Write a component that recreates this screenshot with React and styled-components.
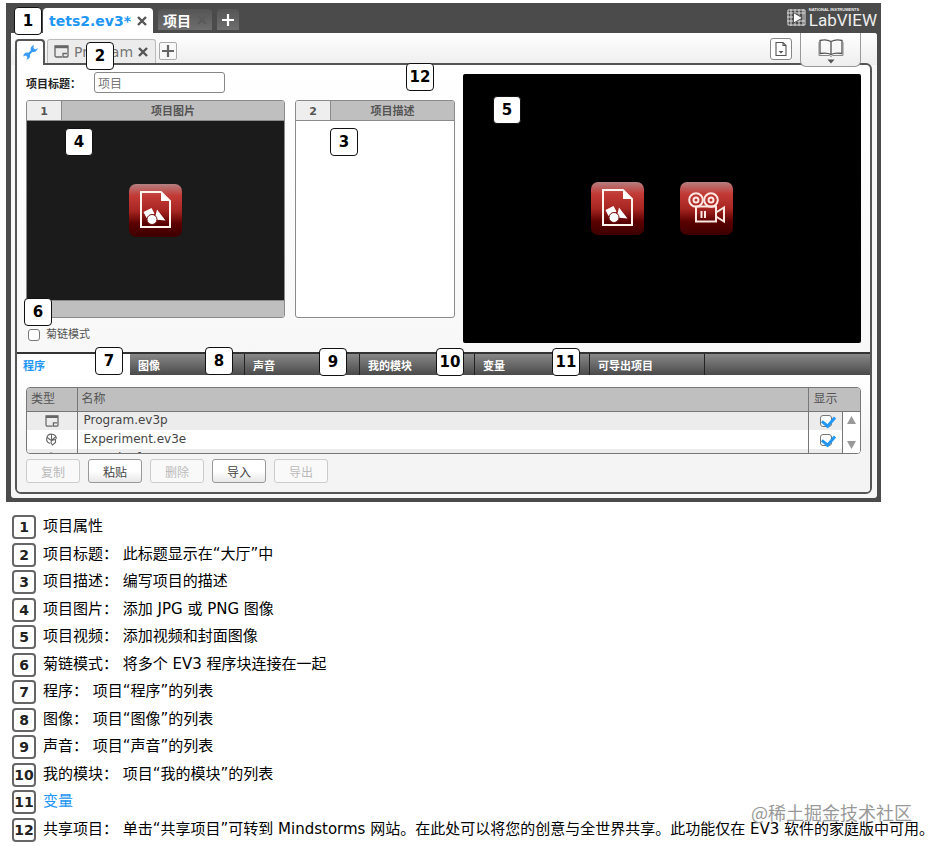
import React from "react";
import styled, { createGlobalStyle } from "styled-components";

const sans = `"DejaVu Sans", "Noto Sans CJK SC", sans-serif`;
const blue = "#2196f3";
const frameGray = "#4b4b4b";
const lineGray = "#8a8a8a";

const GlobalStyle = createGlobalStyle`
  * {
    box-sizing: border-box;
  }
  body {
    margin: 0;
    background: #fff;
    font-family: ${sans};
  }
  button, input {
    font-family: inherit;
  }
`;

const Page = styled.main`
  padding: 3px 0 2px;
`;

const Figure = styled.figure`
  position: relative;
  margin: 0 55px 0 6px;
`;

const Frame = styled.div`
  padding: 0 4px 4px 5px;
  background: ${frameGray};
`;

const TitleBar = styled.header`
  display: flex;
  align-items: flex-end;
  height: 30px;
  padding-left: 32px;
`;

const ProjectTab = styled.button`
  display: flex;
  align-items: center;
  gap: 6px;
  height: ${(p) => (p.$active ? 25 : 21)}px;
  margin: 0 5px ${(p) => (p.$active ? 0 : 3)}px 0;
  padding: 0 ${(p) => (p.$active ? 6 : 5)}px;
  border: 0;
  border-radius: 4px 4px 0 0;
  background: ${(p) =>
    p.$active ? "#fff" : "linear-gradient(#555, #6e6e6e)"};
  color: ${(p) => (p.$active ? blue : "#fff")};
  font-size: 14px;
  font-weight: bold;
`;

const Brand = styled.div`
  display: flex;
  align-items: center;
  align-self: center;
  gap: 2px;
  margin-left: auto;
  color: #eee;
`;

const BrandText = styled.div`
  font: 17px/16px Roboto, sans-serif;
`;

const BrandSmall = styled.div`
  font: bold 4px/4px "Liberation Sans", sans-serif;
`;

const Body = styled.div`
  padding: 0 5px 4px 4px;
  border-radius: 0 3px 3px 3px;
  background: #f7f7f7;
`;

const ToolBar = styled.div`
  display: flex;
  align-items: flex-end;
  height: 32px;
  margin: 0 -5px 0 -4px;
  padding: 0 16px 0 4px;
  border-radius: 0 3px 0 0;
  background: linear-gradient(#fff, #eee);
`;

const SettingsTab = styled.button`
  position: relative;
  z-index: 1;
  width: 30px;
  height: 26px;
  padding: 2px 0 0;
  border: 2px solid #555;
  border-bottom: 0;
  border-radius: 4px 4px 0 0;
  background: #fff;
`;

const ProgramTab = styled.button`
  display: flex;
  align-items: center;
  gap: 5px;
  width: 109px;
  height: 24px;
  margin: 0 3px 2px 2px;
  padding: 0 6px;
  border: 1px solid #bbb;
  border-bottom: 0;
  border-radius: 3px 3px 0 0;
  background: #ececec;
  color: #777;
  font-size: 14px;
`;

const AddButton = styled.button`
  display: grid;
  place-items: center;
  width: 18px;
  height: 18px;
  margin-bottom: 5px;
  padding: 0;
  border: 1px solid #aaa;
  border-radius: 2px;
  background: #f8f8f8;
`;

const CommentButton = styled.button`
  display: grid;
  place-items: center;
  width: 22px;
  height: 22px;
  margin: 0 8px 5px auto;
  padding: 0;
  border: 1px solid #888;
  border-radius: 3px;
  background: #fff;
`;

const BookButton = styled.button`
  position: relative;
  z-index: 1;
  align-self: flex-start;
  width: 61px;
  height: 34px;
  padding: 5px 0 0;
  border: 1px solid #999;
  border-top: 0;
  border-radius: 0 0 6px 6px;
  background: linear-gradient(#fff, #eee);
`;

const Panel = styled.div`
  margin-top: -2px;
  border: 2px solid #555;
  border-radius: 0 6px 6px 6px;
  background: linear-gradient(#fff, #f4f4f4);
  overflow: hidden;
`;

const Properties = styled.section`
  display: flex;
  gap: 8px;
  padding: 7px 9px 9px;
`;

const Details = styled.div`
  flex: 429 1 0;
  min-width: 0;
`;

const TitleField = styled.label`
  display: flex;
  align-items: center;
  color: #222;
  font-size: 11px;
  font-weight: bold;
`;

const FieldName = styled.span`
  width: 68px;
`;

const TitleInput = styled.input`
  width: 131px;
  height: 21px;
  padding: 0 3px;
  border: 1px solid #888;
  border-radius: 3px;
  background: #fff;
  color: #777;
  font-size: 12px;
`;

const Cards = styled.div`
  display: grid;
  grid-template-columns: 259fr 160fr;
  gap: 10px;
  height: 218px;
  margin-top: 7px;
`;

const Card = styled.div`
  display: flex;
  flex-direction: column;
  border: 1px solid ${lineGray};
  border-radius: 3px;
  background: #fff;
  overflow: hidden;
`;

const CardHead = styled.div`
  display: flex;
  height: 20px;
  border-bottom: 1px solid ${lineGray};
  background: #bfbfbf;
  color: #555;
  font-size: 11px;
  font-weight: bold;
  line-height: 21px;
  text-align: center;
`;

const CardNumber = styled.span`
  width: 35px;
  border-right: 1px solid ${lineGray};
  background: #eee;
`;

const CardTitle = styled.span`
  flex: 1;
`;

const Preview = styled.div`
  display: grid;
  flex: 1;
  place-items: center;
  background: #1b1b1b;
`;

const CardFoot = styled.div`
  height: 17px;
  border-top: 1px solid ${lineGray};
  background: #bfbfbf;
`;

const Description = styled.textarea`
  flex: 1;
  min-width: 0;
  border: 0;
  background: transparent;
  resize: none;
`;

const Video = styled.div`
  display: flex;
  flex: 398 1 0;
  align-items: center;
  justify-content: center;
  gap: 36px;
  height: 269px;
  margin-top: 2px;
  border-radius: 2px;
  background: #000;
`;

const MediaButton = styled.button`
  display: grid;
  place-items: center;
  width: 53px;
  height: 53px;
  padding: 0;
  border: 0;
  border-radius: 7px;
  background: linear-gradient(#b58080, #c33a36 22%, #a82622 50%, #5a0000 75%, #3c0000);
`;

const ChainLabel = styled.label`
  display: flex;
  align-items: center;
  gap: 6px;
  margin-top: 10px;
  padding-left: 2px;
  color: #555;
  font-size: 11px;
  line-height: 14px;
`;

const CheckBox = styled.input`
  position: relative;
  width: 12px;
  height: 12px;
  margin: 0;
  border: 1px solid #777;
  border-radius: 3px;
  background: #fff;
  appearance: none;

  &:checked::after {
    content: "";
    position: absolute;
    top: -2px;
    left: 3px;
    width: 6px;
    height: 10px;
    border: solid ${blue};
    border-width: 0 3px 3px 0;
    transform: rotate(40deg);
  }
`;

const TabStrip = styled.nav`
  display: flex;
  height: 23px;
  border-top: 2px solid #333;
  background: linear-gradient(#888, #4a4a4a);
`;

const StripTab = styled.button`
  width: ${(p) => (p.$active ? 113 : 115)}px;
  padding: 0 0 0 ${(p) => (p.$active ? 6 : 8)}px;
  border: 0;
  border-right: ${(p) => (p.$active ? 0 : 1)}px solid #222;
  background: ${(p) => (p.$active ? "#fff" : "transparent")};
  color: ${(p) => (p.$active ? blue : "#fff")};
  font-size: 11px;
  font-weight: bold;
  text-align: left;
`;

const Files = styled.section`
  padding: 12px 9px 9px;
  background: linear-gradient(#fff, #f4f4f4 60%);
`;

const TableBox = styled.div`
  height: 67px;
  border: 1px solid #777;
  border-radius: 4px;
  background: #fff;
  overflow: hidden;
`;

const FileTable = styled.table`
  width: 100%;
  border-collapse: collapse;
  table-layout: fixed;
  color: #444;
  font-size: 12px;
`;

const HeadCell = styled.th`
  height: 23px;
  padding: 0 0 0 4px;
  border-right: 1px solid #777;
  border-bottom: 1px solid #777;
  background: #bfbfbf;
  color: #555;
  font-weight: normal;
  line-height: 16px;
  text-align: left;

  &:last-child {
    border-right: 0;
  }
`;

const FileRow = styled.tr`
  height: 19px;
  background: ${(p) => (p.$shaded ? "#ececec" : "#fff")};
`;

const Cell = styled.td`
  height: 19px;
  padding: 0 0 0 ${(p) => (p.$center ? 0 : 6)}px;
  border-right: 1px solid #777;
  line-height: 15px;
  text-align: ${(p) => (p.$center ? "center" : "left")};

  svg, input {
    vertical-align: middle;
  }
`;

const ScrollCell = styled.td`
  padding: 0;
  background: #fff;
  vertical-align: top;
`;

const Scroll = styled.div`
  display: flex;
  flex-direction: column;
  justify-content: space-between;
  align-items: center;
  height: 41px;
  padding: 4px 0;
`;

const ScrollButton = styled.button`
  display: grid;
  padding: 0;
  border: 0;
  background: none;
`;

const Actions = styled.div`
  display: flex;
  gap: 8px;
  margin-top: 5px;
`;

const ActionButton = styled.button`
  width: 54px;
  height: 24px;
  padding: 0;
  border: 1px solid #999;
  border-radius: 3px;
  background: linear-gradient(#fff 50%, #e8e8e8);
  color: #444;
  font-size: 12px;

  &:disabled {
    border-color: #ccc;
    background: #f9f9f9;
    color: #bbb;
  }
`;

const Badge = styled.span`
  display: grid;
  flex: none;
  place-items: center;
  width: ${(p) => p.$size}px;
  height: ${(p) => p.$size}px;
  border: ${(p) => (p.$size > 24 ? "1px solid #111" : "2px solid #666")};
  border-radius: 4px;
  background: #fff;
  color: ${(p) => (p.$size > 24 ? "#000" : "#222")};
  font-size: ${(p) => (p.$size > 24 ? 15 : 14)}px;
  font-weight: bold;
  line-height: 20px;
`;

const Callout = styled(Badge)`
  position: absolute;
  z-index: 2;
  top: ${(p) => p.$y}px;
  left: ${(p) => p.$x}px;
`;

const Legend = styled.ol`
  display: grid;
  grid-auto-rows: 28px 27px;
  position: relative;
  margin: 11px 0 0;
  padding: 0 0 0 12px;
  list-style: none;
`;

const LegendItem = styled.li`
  display: flex;
  align-items: center;
  gap: 7px;
  color: #000;
  font-size: 15px;
  line-height: 20px;
  white-space: pre;
`;

const LegendText = styled.span`
  padding-bottom: 2px;
`;

const LegendLink = styled.a`
  color: ${blue};
  text-decoration: none;
`;

const Watermark = styled.span`
  position: absolute;
  right: 24px;
  bottom: 18px;
  color: #999;
  font: 18px/26px "Noto Sans CJK SC", sans-serif;
  text-shadow: 0 0 2px #fff;
`;

const Cross = ({ color = "#555", size = 10 }) => (
  <svg width={size} height={size} viewBox="0 0 10 10" aria-hidden="true">
    <path d="M1 1l8 8M9 1L1 9" stroke={color} strokeWidth="2.4" />
  </svg>
);

const Plus = ({ color, size = 12 }) => (
  <svg width={size} height={size} viewBox="0 0 12 12" aria-hidden="true">
    <path d="M6 0v12M0 6h12" stroke={color} strokeWidth="2.2" />
  </svg>
);

const WrenchIcon = () => (
  <svg width="17" height="17" viewBox="0 0 17 17" aria-hidden="true">
    <path
      d="M12 1.2a4 4 0 0 0-3.2 5.2L6.4 8.8a3.6 3.6 0 0 0-5 3.8l2.2-1.2 1.8 1.7-1 2.3a3.6 3.6 0 0 0 3.5-5l2.5-2.5a4 4 0 0 0 5.2-3.8l-2.3 1.5-2-1.7z"
      fill="#3a9bf5"
    />
  </svg>
);

const ProgramIcon = ({ width = 15 }) => (
  <svg width={width} height={width - 2} viewBox="0 0 15 13" aria-hidden="true">
    <path
      d="M8 12H2.5Q1 12 1 10.500V1H14V11q0 1-1 1H9V8.500h4"
      fill="none"
      stroke="#666"
      strokeWidth="1.3"
    />
    <path d="M1 2h13" stroke="#666" strokeWidth="2.4" />
  </svg>
);

const ExperimentIcon = () => (
  <svg width="13" height="13" viewBox="0 0 13 13" aria-hidden="true">
    <g fill="none" stroke="#666" strokeWidth="1.1">
      <path d="M5 10.500A4.800 4.800 0 1 1 11.300 6" />
      <path d="M6.500 1v7M2 4.500l4.500 3L11 3.500M6.500 7.500l4-1v3l-3 2.500-1.500-2z" />
    </g>
  </svg>
);

const CommentIcon = () => (
  <svg width="14" height="16" viewBox="0 0 14 16" aria-hidden="true">
    <path d="M2 1.500h7l3 3v10H2zM9 1.500v3h3" fill="none" stroke="#555" strokeWidth="1.1" />
    <path d="M4.500 10h5L7 12.500z" fill="#555" />
  </svg>
);

const BookIcon = () => (
  <svg width="28" height="26" viewBox="0 0 28 26" aria-hidden="true">
    <path
      d="M14 3.500Q9 .8 3 2.500V15.500q7-1.200 11 1 4-2.200 11-1V2.500Q19 .8 14 3.500zM14 3.500V16"
      fill="none"
      stroke="#555"
      strokeWidth="1.3"
    />
    <path d="M2 4v13.500h10.500l1.500 1 1.500-1H26V4" fill="none" stroke="#888" />
    <path d="M10.500 21.500h7L14 25.500z" fill="#555" />
  </svg>
);

const ImageIcon = () => (
  <svg width="37" height="41" viewBox="0 0 37 41" aria-hidden="true">
    <path d="M4 2h20l9 9v26H4z" fill="none" stroke="#fff3ee" strokeWidth="2" />
    <path d="M24 2v9h9z" fill="#fff" />
    <path d="M6.500 22l8-4 3 5.500-8 4.500zM20 19.500l8.500 11-11-1z" fill="#fff" />
    <circle cx="15" cy="29.500" r="5" fill="#fff" stroke="#751010" />
  </svg>
);

const CameraIcon = () => (
  <svg width="39" height="35" viewBox="0 0 39 35" aria-hidden="true">
    <g fill="none" stroke="#ffe8e2" strokeWidth="2">
      <circle cx="9" cy="9" r="6.800" />
      <circle cx="9" cy="9" r="2.500" />
      <circle cx="24" cy="9" r="6.800" />
      <circle cx="24" cy="9" r="2.500" />
      <path d="M9 15.500h20v15H9z" />
      <path d="M29 21.500l8-5v14l-8-5M14.500 20v7M18 20v7" />
    </g>
  </svg>
);

const BrandIcon = () => (
  <svg width="20" height="18" viewBox="0 0 20 18" aria-hidden="true">
    <path
      d="M0 4h18M0 8h6M0 12h18M4 0v17M8 0v17M12 0v17M16 0v17M1 1h17v15H1z"
      fill="none"
      stroke="#ddd"
    />
    <path d="M6.500 3.500l9 5.500-9 5z" fill="#fff" stroke="#555" />
  </svg>
);

const Arrow = ({ down }) => (
  <svg width="9" height="8" viewBox="0 0 9 8" aria-hidden="true">
    <path d={down ? "M0 0h9L4.500 8z" : "M0 8h9L4.500 0z"} fill="#999" />
  </svg>
);

const callouts = [
  { n: 1, x: 8, y: 4 },
  { n: 2, x: 80, y: 39 },
  { n: 3, x: 324, y: 125 },
  { n: 4, x: 59, y: 125 },
  { n: 5, x: 487, y: 93 },
  { n: 6, x: 18, y: 295 },
  { n: 7, x: 89, y: 344 },
  { n: 8, x: 199, y: 344 },
  { n: 9, x: 313, y: 345 },
  { n: 10, x: 430, y: 345 },
  { n: 11, x: 546, y: 345 },
  { n: 12, x: 400, y: 60 },
];

const tabs = ["程序", "图像", "声音", "我的模块", "变量", "可导出项目"];

const files = [
  { name: "Program.ev3p", icon: <ProgramIcon width={14} /> },
  { name: "Experiment.ev3e", icon: <ExperimentIcon /> },
  { name: "Sound.rsf", icon: <ExperimentIcon /> },
];

const actions = [
  { label: "复制", disabled: true },
  { label: "粘贴" },
  { label: "删除", disabled: true },
  { label: "导入" },
  { label: "导出", disabled: true },
];

const legend = [
  "项目属性",
  "项目标题： 此标题显示在“大厅”中",
  "项目描述： 编写项目的描述",
  "项目图片： 添加 JPG 或 PNG 图像",
  "项目视频： 添加视频和封面图像",
  "菊链模式： 将多个 EV3 程序块连接在一起",
  "程序： 项目“程序”的列表",
  "图像： 项目“图像”的列表",
  "声音： 项目“声音”的列表",
  "我的模块： 项目“我的模块”的列表",
  <LegendLink href="#variables">变量</LegendLink>,
  "共享项目： 单击“共享项目”可转到 Mindstorms 网站。在此处可以将您的创意与全世界共享。此功能仅在 EV3 软件的家庭版中可用。",
];

const Header = () => (
  <TitleBar>
    <ProjectTab $active>
      tets2.ev3*
      <Cross />
    </ProjectTab>
    <ProjectTab>
      项目
      <Cross color="#5a5a5a" />
    </ProjectTab>
    <ProjectTab aria-label="新建项目">
      <Plus color="#fff" />
    </ProjectTab>
    <Brand>
      <BrandIcon />
      <div>
        <BrandSmall>NATIONAL INSTRUMENTS</BrandSmall>
        <BrandText>LabVIEW</BrandText>
      </div>
    </Brand>
  </TitleBar>
);

const Tools = () => (
  <ToolBar>
    <SettingsTab aria-label="项目属性">
      <WrenchIcon />
    </SettingsTab>
    <ProgramTab>
      <ProgramIcon />
      Program
      <Cross />
    </ProgramTab>
    <AddButton aria-label="新建程序">
      <Plus color="#666" />
    </AddButton>
    <CommentButton aria-label="注释">
      <CommentIcon />
    </CommentButton>
    <BookButton aria-label="内容编辑器">
      <BookIcon />
    </BookButton>
  </ToolBar>
);

const ProjectProperties = () => (
  <Properties>
    <Details>
      <TitleField>
        <FieldName>项目标题：</FieldName>
        <TitleInput defaultValue="项目" />
      </TitleField>
      <Cards>
        <Card>
          <CardHead>
            <CardNumber>1</CardNumber>
            <CardTitle>项目图片</CardTitle>
          </CardHead>
          <Preview>
            <MediaButton aria-label="添加图片">
              <ImageIcon />
            </MediaButton>
          </Preview>
          <CardFoot />
        </Card>
        <Card>
          <CardHead>
            <CardNumber>2</CardNumber>
            <CardTitle id="description">项目描述</CardTitle>
          </CardHead>
          <Description aria-labelledby="description" />
        </Card>
      </Cards>
      <ChainLabel>
        <CheckBox type="checkbox" />
        菊链模式
      </ChainLabel>
    </Details>
    <Video>
      <MediaButton aria-label="添加封面">
        <ImageIcon />
      </MediaButton>
      <MediaButton aria-label="添加视频">
        <CameraIcon />
      </MediaButton>
    </Video>
  </Properties>
);

const FileList = () => (
  <Files>
    <TableBox>
      <FileTable>
        <colgroup>
          <col width="50" />
          <col />
          <col width="34" />
          <col width="17" />
        </colgroup>
        <thead>
          <tr>
            <HeadCell>类型</HeadCell>
            <HeadCell>名称</HeadCell>
            <HeadCell colSpan={2}>显示</HeadCell>
          </tr>
        </thead>
        <tbody>
          {files.map((file, i) => (
            <FileRow key={file.name} $shaded={i % 2 === 0}>
              <Cell $center>{file.icon}</Cell>
              <Cell>{file.name}</Cell>
              <Cell $center>
                <CheckBox type="checkbox" defaultChecked aria-label={file.name} />
              </Cell>
              {i === 0 && (
                <ScrollCell rowSpan={files.length}>
                  <Scroll>
                    <ScrollButton aria-label="向上">
                      <Arrow />
                    </ScrollButton>
                    <ScrollButton aria-label="向下">
                      <Arrow down />
                    </ScrollButton>
                  </Scroll>
                </ScrollCell>
              )}
            </FileRow>
          ))}
        </tbody>
      </FileTable>
    </TableBox>
    <Actions>
      {actions.map(({ label, disabled }) => (
        <ActionButton key={label} disabled={disabled}>
          {label}
        </ActionButton>
      ))}
    </Actions>
  </Files>
);

const App = () => {
  return (
    <Page>
      <GlobalStyle />
      <Figure>
        <Frame>
          <Header />
          <Body>
            <Tools />
            <Panel>
              <ProjectProperties />
              <TabStrip>
                {tabs.map((tab, i) => (
                  <StripTab key={tab} $active={i === 0}>
                    {tab}
                  </StripTab>
                ))}
              </TabStrip>
              <FileList />
            </Panel>
          </Body>
        </Frame>
        {callouts.map(({ n, x, y }) => (
          <Callout key={n} $size={28} $x={x} $y={y}>
            {n}
          </Callout>
        ))}
      </Figure>
      <Legend>
        {legend.map((text, i) => (
          <LegendItem key={i}>
            <Badge $size={24}>{i + 1}</Badge>
            <LegendText>{text}</LegendText>
          </LegendItem>
        ))}
        <Watermark>@稀土掘金技术社区</Watermark>
      </Legend>
    </Page>
  );
};

export default App;
